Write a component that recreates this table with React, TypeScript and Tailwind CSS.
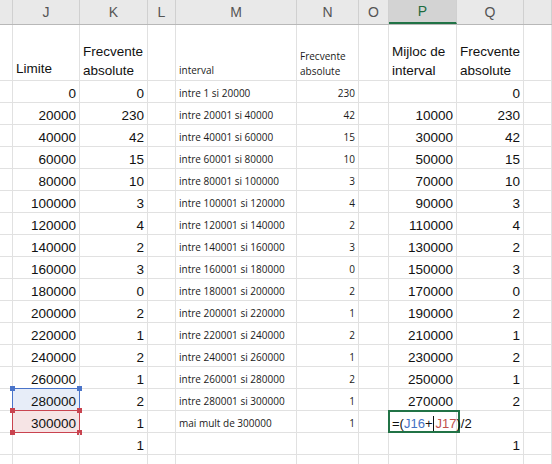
import React from 'react'

// column widths, left to right: I (partial), J, K, L, M, N, O, P, Q, R (partial)
const W = [13, 67, 68, 28, 121, 62, 30, 68, 67, 28]
const LETTERS = ['', 'J', 'K', 'L', 'M', 'N', 'O', 'P', 'Q', '']

const limite = [0, 20000, 40000, 60000, 80000, 100000, 120000, 140000, 160000, 180000, 200000, 220000, 240000, 260000, 280000, 300000]
const kAbs = ['0', '230', '42', '15', '10', '3', '4', '2', '3', '0', '2', '1', '2', '1', '2', '1', '1']
const nAbs = ['230', '42', '15', '10', '3', '4', '2', '3', '0', '2', '1', '2', '1', '2', '1', '1', '']
const qAbs = ['0', '230', '42', '15', '10', '3', '4', '2', '3', '0', '2', '1', '2', '1', '2', '', '1']

const intervals = limite.map((v, i) =>
    i === limite.length - 1 ? 'mai mult de 300000' : `intre ${v + 1} si ${limite[i + 1]}`
)

type CellProps = {
    w: number
    right?: boolean
    small?: boolean
    className?: string
    children?: React.ReactNode
}

function Cell({ w, right, small, className = '', children }: CellProps) {
    return (
        <div
            style={{ width: w }}
            className={`shrink-0 h-full border-r border-[#e1e1e1] flex items-end whitespace-nowrap ${
                right ? 'justify-end pr-[3px]' : 'pl-[3px]'
            } ${small ? 'text-[10px] font-["Open_Sans",sans-serif] text-[#1a1a1a]' : 'text-[13.5px]'} ${className}`}
        >
            {children}
        </div>
    )
}

function Handle({ pos, color }: { pos: string; color: string }) {
    return <span className={`absolute w-[5px] h-[5px] ${pos} ${color}`} />
}

export default function App() {
    const rows = limite.map((v, i) => ({
        j: String(v),
        k: kAbs[i],
        m: intervals[i],
        n: nAbs[i],
        p: i >= 1 && i <= 14 ? String(v - 10000) : '',
        q: qAbs[i],
    }))
    rows.push({ j: '', k: '1', m: '', n: '', p: '', q: '1' })

    return (
        <div className="w-[552px] h-[464px] overflow-hidden bg-white text-[#111] font-['Liberation_Sans',Arial,sans-serif]">
            {/* column letters */}
            <div className="flex h-[25px] bg-[#e9e9e9] border-b border-[#b8b8b8]">
                {LETTERS.map((l, i) => (
                    <div
                        key={i}
                        style={{ width: W[i] }}
                        className={`shrink-0 flex items-center justify-center text-[14px] border-r border-[#d0d0d0] ${
                            l === 'P'
                                ? 'bg-[#d3d3d3] text-[#1e6b40] border-b-2 border-b-[#217346]'
                                : 'text-[#555]'
                        }`}
                    >
                        {l}
                    </div>
                ))}
            </div>

            {/* titles */}
            <div className="flex h-[56px] border-b border-[#e1e1e1]">
                <Cell w={W[0]} />
                <Cell w={W[1]} className="pb-[1px]">Limite</Cell>
                <Cell w={W[2]} className="leading-[19px]">
                    <div>Frecvente<br />absolute</div>
                </Cell>
                <Cell w={W[3]} />
                <Cell w={W[4]} small className="pb-[2px]">interval</Cell>
                <Cell w={W[5]} small className="leading-[15px] pb-[1px]">
                    <div>Frecvente<br />absolute</div>
                </Cell>
                <Cell w={W[6]} />
                <Cell w={W[7]} className="leading-[19px]">
                    <div>Mijloc de<br />interval</div>
                </Cell>
                <Cell w={W[8]} className="leading-[19px]">
                    <div>Frecvente<br />absolute</div>
                </Cell>
                <Cell w={W[9]} />
            </div>

            {/* data */}
            {rows.map((r, i) => {
                const isJ16 = i === 14
                const isJ17 = i === 15
                return (
                    <div key={i} className="flex h-[22px] border-b border-[#e1e1e1] leading-[13px]">
                        <Cell w={W[0]} />
                        <Cell
                            w={W[1]}
                            right
                            className={`relative pb-[2px] ${isJ16 ? 'bg-[#e7edf8]' : ''} ${isJ17 ? 'bg-[#f6e4e5]' : ''}`}
                        >
                            {r.j}
                            {isJ16 && (
                                <span className="absolute -left-px -top-px -right-px -bottom-px border border-[#4a74c9]">
                                    <Handle pos="-left-[3px] -top-[3px]" color="bg-[#4a74c9]" />
                                    <Handle pos="-right-[3px] -top-[3px]" color="bg-[#4a74c9]" />
                                </span>
                            )}
                            {isJ17 && (
                                <span className="absolute -left-px -top-px -right-px -bottom-px border border-[#c9434f]">
                                    <Handle pos="-left-[3px] -top-[3px]" color="bg-[#c9434f]" />
                                    <Handle pos="-right-[3px] -top-[3px]" color="bg-[#c9434f]" />
                                    <Handle pos="-left-[3px] -bottom-[3px]" color="bg-[#c9434f]" />
                                    <Handle pos="-right-[3px] -bottom-[3px]" color="bg-[#c9434f]" />
                                </span>
                            )}
                        </Cell>
                        <Cell w={W[2]} right className="pb-[2px]">{r.k}</Cell>
                        <Cell w={W[3]} />
                        <Cell w={W[4]} small className="pb-[2px]">{r.m}</Cell>
                        <Cell w={W[5]} small right className="pb-[2px]">{r.n}</Cell>
                        <Cell w={W[6]} />
                        {isJ17 ? (
                            <div style={{ width: W[7] }} className="shrink-0 h-full relative z-10 border-r border-[#e1e1e1]">
                                <span className="absolute -left-px -top-px w-[72px] -bottom-px border-2 border-[#217346]" />
                                <span className="absolute left-[3px] bottom-[2px] flex items-end whitespace-nowrap text-[13px]">
                                    =(<span className="text-[#4472c4]">J16</span>+
                                    <span className="inline-block w-px h-[15px] mx-px bg-[#111] mb-[-1px]" />
                                    <span className="text-[#c0504d]">J17</span>)/2
                                </span>
                            </div>
                        ) : (
                            <Cell w={W[7]} right className="pb-[2px]">{r.p}</Cell>
                        )}
                        <Cell w={W[8]} right className="pb-[2px]">{r.q}</Cell>
                        <Cell w={W[9]} />
                    </div>
                )
            })}

            {/* trailing empty row */}
            <div className="flex h-[22px] border-b border-[#e1e1e1]">
                {W.map((w, i) => (
                    <Cell key={i} w={w} />
                ))}
            </div>
        </div>
    )
}
